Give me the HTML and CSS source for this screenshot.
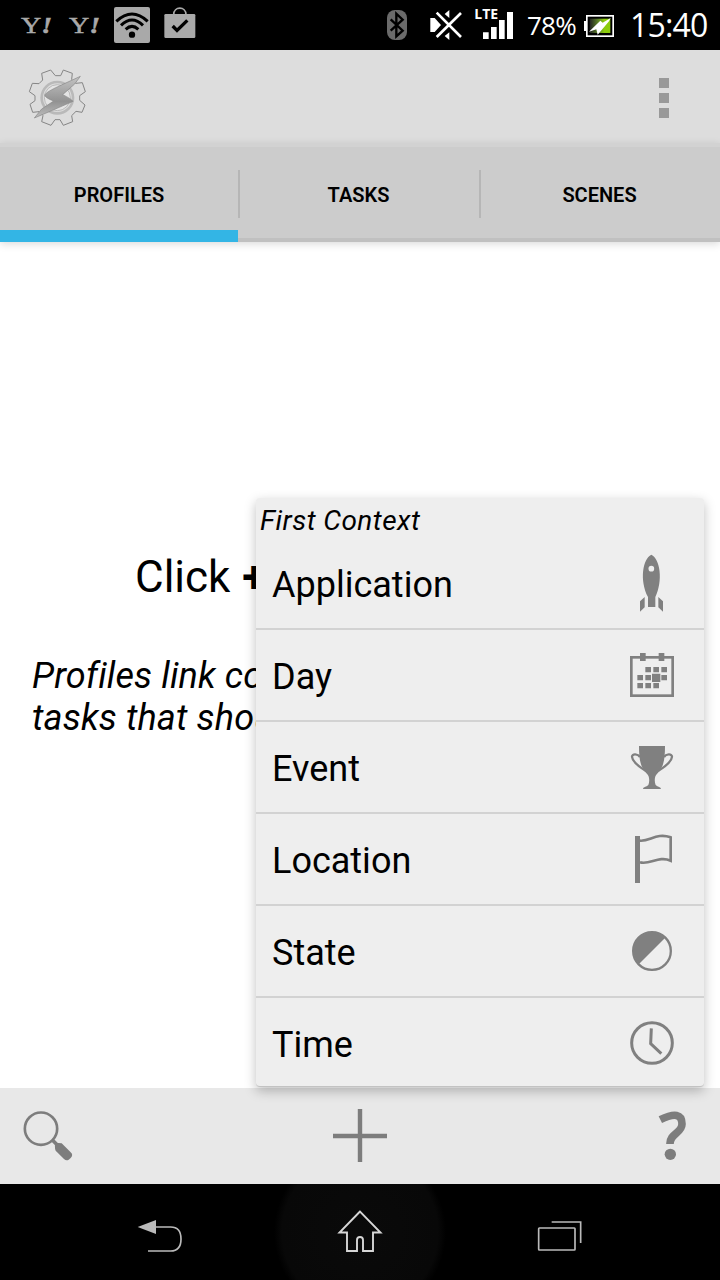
FILE: index.html
```html
<!DOCTYPE html>
<html lang="en">
<head>
    <meta charset="UTF-8">
    <meta name="viewport" content="width=device-width, initial-scale=1.0">
    <title>Profiles</title>
    <link rel="stylesheet" href="styles.css">
</head>
<body>
    <div class="screen">
        <!-- Status bar -->
        <div class="status-bar">
            <div class="notifications">
                <span class="yahoo">Y<i>!</i></span>
                <span class="yahoo">Y<i>!</i></span>
                <svg class="wifi" width="36" height="36" viewBox="342 21 108 108">
                    <rect x="342" y="21" width="108" height="108" rx="6" fill="#a9a9a9"/>
                    <g fill="none" stroke="#000" stroke-width="9">
                        <path d="M349 64Q396 20 443 64"/>
                        <path d="M363 76Q396 44 429 76"/>
                        <path d="M377 88Q396 70 415 88"/>
                    </g>
                    <circle cx="396" cy="104" r="9.5"/>
                </svg>
                <svg class="store" width="32" height="32" viewBox="491 21 96 96">
                    <path d="M520 44C520 18 557 18 557 44" fill="none" stroke="#a9a9a9" stroke-width="5"/>
                    <rect x="492" y="42" width="93" height="72" rx="4" fill="#a9a9a9"/>
                    <path d="M517 78L530 91L561 61" fill="none" stroke="#000" stroke-width="10"/>
                </svg>
            </div>
            <div class="system">
                <svg class="bluetooth" width="20" height="30" viewBox="51 30 60 90">
                    <rect x="51" y="30" width="60" height="90" rx="24" fill="#6b6b6b"/>
                    <path d="M62 58L98 92L79 109V41L98 59L62 92" fill="none" stroke="#000" stroke-width="7"/>
                </svg>
                <svg class="mute" width="32" height="30" viewBox="179 30 96 90">
                    <path d="M180 54H193L212 75L193 96H180Z" fill="#fff"/>
                    <path d="M223 42L237 30V54ZM223 108L237 97V120Z" fill="#fff"/>
                    <path d="M199 38L272 111M272 39L199 111" stroke="#fff" stroke-width="8"/>
                </svg>
                <svg class="signal" width="38" height="32" viewBox="315 24 114 96">
                    <text x="313" y="57" class="lte">LTE</text>
                    <path d="M339 97H356V117H339ZM363 81H380V117H363ZM387 60H404V117H387ZM411 36H429V117H411Z" fill="#fff"/>
                </svg>
                <span class="percent">78%</span>
                <svg class="battery" width="30" height="24" viewBox="642 42 90 72">
                    <defs>
                        <linearGradient id="charge">
                            <stop offset="0" stop-color="#222"/>
                            <stop offset="0.45" stop-color="#618b25"/>
                            <stop offset="0.7" stop-color="#8ccc0b"/>
                            <stop offset="1" stop-color="#8ccc0b"/>
                        </linearGradient>
                    </defs>
                    <path d="M642 63H648V93H642Z" fill="#fff"/>
                    <rect x="650.5" y="47.5" width="79" height="61" fill="#000" stroke="#fff" stroke-width="5"/>
                    <rect x="659" y="56" width="62" height="43" fill="url(#charge)"/>
                    <path d="M722 54L698 68L691 62L657 95L679 88L683 104L717 64Z" fill="#fff"/>
                </svg>
                <span class="clock">15:40</span>
            </div>
        </div>

        <!-- Action bar -->
        <div class="action-bar">
            <svg class="logo" width="60" height="60" viewBox="81 201 180 180">
                <defs>
                    <linearGradient id="bolt" x1="0" y1="0" x2="0" y2="1">
                        <stop offset="0" stop-color="#c4c4c4"/>
                        <stop offset="0.6" stop-color="#929292"/>
                        <stop offset="1" stop-color="#bdbdbd"/>
                    </linearGradient>
                </defs>
                <path d="M190 210L217 220L215 238L227 250L247 248L256 275L239 287V301L255 315L246 337L228 334L215 347L218 365L190 376L180 359H165L153 376L125 365L129 347L117 335L98 337L90 313L105 302V287L88 275L97 250L117 251L128 240L125 220L152 210L166 227H182Z" fill="#dcdcdc" stroke="#858585" stroke-width="3" stroke-linejoin="round"/>
                <circle cx="172" cy="293" r="47" fill="none" stroke="#b9b9b9" stroke-width="8"/>
                <circle cx="172" cy="293" r="39" fill="#e4e4e4" stroke="#a4a4a4" stroke-width="2"/>
                <path d="M241 229L180 257Q138 276 134 285Q136 294 161 303L125 327L103 354L150 334L219 304Q213 296 188 284L224 252Z" fill="url(#bolt)" stroke="#858585" stroke-width="2" stroke-linejoin="round"/>
            </svg>
            <div class="overflow">
                <span></span>
                <span></span>
                <span></span>
            </div>
        </div>

        <!-- Tabs -->
        <div class="tabs">
            <div class="tab active">PROFILES</div>
            <div class="tab">TASKS</div>
            <div class="tab">SCENES</div>
        </div>

        <div class="content">
            <div class="hint-title">Click <b>+</b></div>
            <div class="hint">Profiles link co<br>tasks that shou</div>
        </div>

        <!-- Bottom bar -->
        <div class="bottom-bar">
            <svg width="50" height="50" viewBox="69 123 150 150">
                <circle cx="123" cy="176" r="48.5" fill="none" stroke="#7d7d7d" stroke-width="8"/>
                <path d="M157 210L172 225" stroke="#7d7d7d" stroke-width="11"/>
                <path d="M165 222Q167 218 175 219L185 220L212 247Q221 255 212 264L206 269Q199 274 192 267L167 242Q164 238 165 222Z" fill="#7d7d7d"/>
            </svg>
            <svg width="54" height="54" viewBox="0 0 54 54">
                <path d="M0 27H54M27 0V53" stroke="#7d7d7d" stroke-width="4.4"/>
            </svg>
            <svg width="50" height="50" viewBox="861 123 150 150">
                <path d="M901 149Q966 117 966 162C966 190 929 190 930 222" fill="none" stroke="#7d7d7d" stroke-width="23"/>
                <circle cx="931" cy="253" r="17" fill="#7d7d7d"/>
            </svg>
        </div>

        <!-- Navigation bar -->
        <div class="nav-bar">
            <svg class="back" width="46" height="36" viewBox="411 447 138 108">
                <path d="M466 471H512Q543 471 543 507T512 543H444" fill="none" stroke="#bababa" stroke-width="5"/>
                <path d="M413 471L468 450V492Z" fill="#bababa"/>
            </svg>
            <div class="home">
                <svg width="46" height="44" viewBox="0 0 46 44">
                    <path d="M23 1.5L2.5 22.5H10V41H20V30Q20 27 23 27T26 30V41H36V22.5H43.5Z" fill="none" stroke="#d6d6d6" stroke-width="1.9"/>
                </svg>
            </div>
            <svg class="recent" width="46" height="34" viewBox="532 453 138 102">
                <rect x="537" y="477" width="109" height="66" rx="2" fill="none" stroke="#bababa" stroke-width="5"/>
                <path d="M576 459H663V522" fill="none" stroke="#bababa" stroke-width="5"/>
            </svg>
        </div>

        <!-- Context menu -->
        <div class="menu">
            <div class="menu-title">First Context</div>
            <div class="menu-item">
                <span>Application</span>
                <svg width="48" height="60" viewBox="84 39 144 180">
                    <path d="M154 44C180 56 190 121 166 171V201H144V171C118 121 128 56 154 44Z" fill="#808080"/>
                    <circle cx="154" cy="86" r="8.5" fill="#eee"/>
                    <path d="M134 171V202L120 215V184ZM175 171L189 184V215L175 202Z" fill="#808080"/>
                </svg>
            </div>
            <div class="menu-item">
                <span>Day</span>
                <svg width="48" height="48" viewBox="84 333 144 144">
                    <rect x="94" y="352" width="124" height="115" fill="none" stroke="#808080" stroke-width="8"/>
                    <path d="M120 339H137V363H120ZM176 339H193V363H176ZM136 381H153V397H136ZM160 381H177V397H160ZM184 381H201V397H184ZM112 405H129V421H112ZM136 405H153V421H136ZM156 401H181V426H156ZM184 405H201V421H184ZM112 429H129V445H112ZM136 429H153V445H136ZM160 429H177V445H160Z" fill="#808080"/>
                </svg>
            </div>
            <div class="menu-item">
                <span>Event</span>
                <svg width="48" height="48" viewBox="84 609 144 144">
                    <path d="M117 618H195C195 660 191 682 170 703C163 710 163 726 167 735C171 740 182 740 183 747H129C130 740 141 740 145 735C149 726 149 710 142 703C121 682 117 660 117 618Z" fill="#808080"/>
                    <path d="M120 651C114 642 96 640 96 650C97 665 112 677 137 692M192 651C198 642 216 640 216 650C215 665 200 677 175 692" fill="none" stroke="#808080" stroke-width="7"/>
                </svg>
            </div>
            <div class="menu-item">
                <span>Location</span>
                <svg width="48" height="50" viewBox="84 57 144 150">
                    <rect x="105" y="63" width="15" height="141" fill="#808080"/>
                    <path d="M120 77C149 80 170 52 212 67V137C176 121 149 151 120 142" fill="none" stroke="#808080" stroke-width="8"/>
                </svg>
            </div>
            <div class="menu-item">
                <span>State</span>
                <svg width="48" height="48" viewBox="84 336 144 144">
                    <circle cx="156" cy="408" r="56.5" fill="none" stroke="#808080" stroke-width="7"/>
                    <path d="M117 447A55 55 0 0 1 195 369Z" fill="#808080"/>
                </svg>
            </div>
            <div class="menu-item">
                <span>Time</span>
                <svg width="48" height="48" viewBox="84 612 144 144">
                    <circle cx="156" cy="684" r="61" fill="none" stroke="#808080" stroke-width="9"/>
                    <path d="M154 640L152 686L184 716" fill="none" stroke="#808080" stroke-width="9"/>
                </svg>
            </div>
        </div>
    </div>
</body>
</html>
```
FILE: styles.css
```css
body {
    margin: 0;
    font-family: Roboto, sans-serif;
    color: #000;
    background: #fff;
}
svg {
    display: block;
    flex-shrink: 0;
}
.screen {
    position: relative;
    display: flex;
    flex-direction: column;
    width: 720px;
    height: 1280px;
    overflow: hidden;
}

/* Status bar */
.status-bar {
    display: flex;
    justify-content: space-between;
    height: 50px;
    background: #000;
    color: #fff;
}
.notifications,
.system {
    display: flex;
    align-items: center;
}
.notifications {
    padding-left: 21px;
}
.yahoo {
    width: 48px;
    font-family: "Liberation Serif", serif;
    font-size: 24px;
    line-height: 50px;
    color: #a9a9a9;
    -webkit-text-stroke: 0.5px #a9a9a9;
    transform: scaleX(1.17);
    transform-origin: left;
}
.yahoo i {
    font-weight: bold;
}
.wifi {
    margin: 0 14px 0 -3px;
}
.store {
    margin-top: -4px;
}
.system {
    padding-right: 12px;
}
.bluetooth {
    margin-right: 23px;
}
.mute {
    margin-right: 13px;
}
.signal {
    margin-right: 14px;
    margin-top: -2px;
    overflow: visible;
}
.lte {
    font: bold 42px "Open Sans", sans-serif;
    fill: #fff;
}
.percent {
    width: 57px;
    font-family: "Open Sans", sans-serif;
    font-size: 26px;
    letter-spacing: -0.8px;
}
.battery {
    margin: 2px 16px 0 0;
}
.clock {
    width: 78px;
    margin-top: -1px;
    font-family: "Open Sans", sans-serif;
    font-size: 32px;
    letter-spacing: -0.8px;
}

/* Action bar */
.action-bar {
    display: flex;
    justify-content: space-between;
    align-items: center;
    box-sizing: border-box;
    height: 93px;
    padding: 2px 51px 0 27px;
    background: #ddd;
}
.logo {
    margin-top: -2px;
}
.overflow {
    display: flex;
    flex-direction: column;
    gap: 5px;
}
.overflow span {
    width: 10px;
    height: 10px;
    background: #999;
}

/* Tabs */
.tabs {
    display: flex;
    box-sizing: border-box;
    height: 99px;
    border-top: 4px solid #d2d2d2;
    background: #ccc;
    box-shadow: 0 2px 8px rgba(0, 0, 0, 0.15);
}
.tab {
    position: relative;
    width: 240px;
    box-sizing: border-box;
    border-bottom: 4px solid #c0c0c0;
    font-size: 20px;
    font-weight: 600;
    line-height: 96px;
    text-align: center;
}
.tab.active {
    width: 238px;
    border-bottom: 12px solid #33b5e5;
}
.tab + .tab {
    flex: 1;
}
.tab + .tab::before {
    content: "";
    position: absolute;
    left: 0;
    top: 23px;
    width: 2px;
    height: 48px;
    background: #b6b6b6;
}

/* Content */
.content {
    flex: 1;
    padding: 309px 32px 0;
}
.hint-title {
    padding-left: 103px;
    font-size: 44px;
    line-height: 52px;
    word-spacing: 1px;
}
.hint {
    margin-top: 52px;
    font-size: 36px;
    font-style: italic;
    line-height: 42px;
    letter-spacing: 0.15px;
}

/* Bottom bar */
.bottom-bar {
    display: flex;
    justify-content: space-between;
    align-items: center;
    height: 96px;
    padding: 0 23px;
    background: #e8e8e8;
}

/* Navigation bar */
.nav-bar {
    display: flex;
    justify-content: center;
    align-items: center;
    height: 96px;
    background: #000;
}
.home {
    display: flex;
    justify-content: center;
    align-items: center;
    width: 172px;
    height: 96px;
    margin: 0 91px;
    background: radial-gradient(circle, #0a0a0a 0, #080808 78px, #000 86px);
}
.back {
    margin-top: 9px;
}
.recent {
    margin-top: 10px;
}

/* Context menu */
.menu {
    position: absolute;
    left: 256px;
    top: 498px;
    width: 448px;
    height: 589px;
    box-sizing: border-box;
    border-bottom: 1px solid #c2c2c2;
    border-radius: 4px;
    background: #eee;
    box-shadow: 0 4px 12px rgba(0, 0, 0, 0.25);
}
.menu-title {
    height: 40px;
    padding-left: 4px;
    font-size: 28px;
    font-style: italic;
    line-height: 46px;
    letter-spacing: 0.45px;
}
.menu-item {
    display: flex;
    justify-content: space-between;
    align-items: center;
    box-sizing: border-box;
    height: 92px;
    padding: 0 28px 0 16px;
    border-bottom: 2px solid #d2d2d2;
    font-size: 36px;
}
.menu-item span {
    padding-top: 4px;
}
.menu-item:last-child {
    height: 90px;
    border-bottom: none;
}
```
